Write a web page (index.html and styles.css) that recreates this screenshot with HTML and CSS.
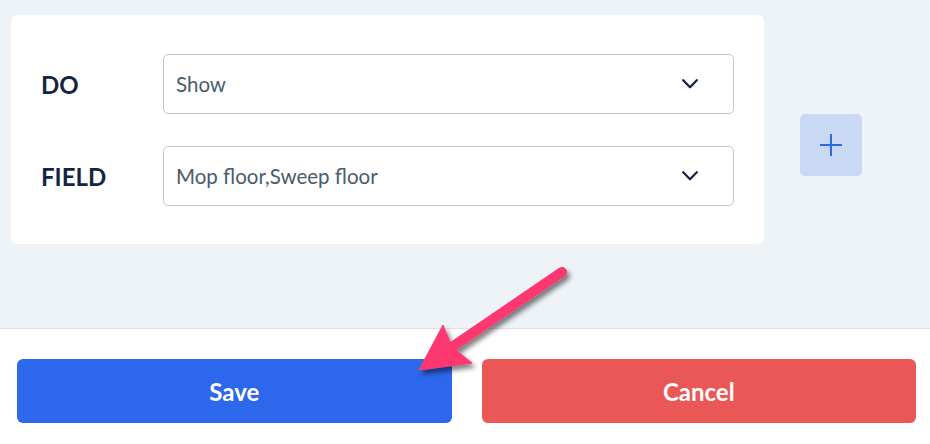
FILE: index.html
```html
<!DOCTYPE html>
<html>
<head>
<meta charset="utf-8">
<link rel="stylesheet" href="styles.css">
</head>
<body>
<div class="page">
  <div class="content">
    <div class="card">
      <div class="row">
        <div class="label">DO</div>
        <div class="select">
          <span class="value">Show</span>
          <svg class="chev" width="16" height="10" viewBox="0 0 16 10"><path d="M1.2 1.2 L8 8.2 L14.8 1.2" fill="none" stroke="#14253f" stroke-width="2.3" stroke-linecap="round" stroke-linejoin="round"/></svg>
        </div>
      </div>
      <div class="row">
        <div class="label">FIELD</div>
        <div class="select">
          <span class="value">Mop floor,Sweep floor</span>
          <svg class="chev" width="16" height="10" viewBox="0 0 16 10"><path d="M1.2 1.2 L8 8.2 L14.8 1.2" fill="none" stroke="#14253f" stroke-width="2.3" stroke-linecap="round" stroke-linejoin="round"/></svg>
        </div>
      </div>
    </div>
    <button class="add">
      <svg width="24" height="24" viewBox="0 0 24 24"><path d="M12 1 V23 M1 12 H23" stroke="#2e67e8" stroke-width="2" fill="none"/></svg>
    </button>
  </div>
  <div class="footer">
    <button class="btn save">Save</button>
    <button class="btn cancel">Cancel</button>
  </div>
  <svg class="arrow" width="930" height="444" viewBox="0 0 930 444">
    <defs>
      <filter id="sh" x="-20%" y="-20%" width="140%" height="140%">
        <feGaussianBlur in="SourceAlpha" stdDeviation="2.5"/>
        <feOffset dx="3" dy="4" result="b"/>
        <feComponentTransfer><feFuncA type="linear" slope="0.5"/></feComponentTransfer>
        <feMerge><feMergeNode/><feMergeNode in="SourceGraphic"/></feMerge>
      </filter>
    </defs>
    <g filter="url(#sh)" fill="#fd3870" stroke="#fd3870">
      <path d="M562 272 L452 347" stroke-width="10" stroke-linecap="round" fill="none"/>
      <path d="M419 370 L443 325 L452 347 L472 363 Z" stroke-width="1" stroke-linejoin="miter"/>
    </g>
  </svg>
</div>
</body>
</html>
```

FILE: styles.css
```css
html, body {
  margin: 0;
  padding: 0;
}
body {
  width: 930px;
  height: 444px;
  overflow: hidden;
  font-family: Lato, "Open Sans", sans-serif;
  background: #ffffff;
}
.page {
  position: relative;
  width: 930px;
  height: 444px;
}
.content {
  height: 329px;
  box-sizing: border-box;
  background: #eef3f8;
  border-bottom: 1px solid #dde1e6;
  padding: 15px 0 0 11px;
  display: flex;
  align-items: flex-start;
  gap: 36px;
}
.card {
  width: 753px;
  height: 229px;
  box-sizing: border-box;
  background: #ffffff;
  border-radius: 6px;
  padding: 39px 30px 0 30px;
  display: flex;
  flex-direction: column;
  gap: 32px;
}
.row {
  display: flex;
  align-items: center;
}
.label {
  width: 122px;
  font-weight: 700;
  font-size: 24px;
  color: #14253f;
}
.select {
  width: 571px;
  height: 60px;
  box-sizing: border-box;
  border: 1px solid #c3c7cc;
  border-radius: 5px;
  display: flex;
  align-items: center;
  justify-content: space-between;
  padding: 0 35px 0 12px;
}
.value {
  font-size: 20.5px;
  color: #4b5b6b;
}
.chev {
  display: block;
}
.add {
  margin-top: 99px;
  width: 62px;
  height: 62px;
  border: none;
  border-radius: 5px;
  background: #c9d9f5;
  display: flex;
  align-items: center;
  justify-content: center;
  padding: 0;
}
.add svg {
  display: block;
}
.footer {
  display: flex;
  gap: 30px;
  padding: 30px 14px 0 17px;
}
.btn {
  flex: 1;
  height: 64px;
  border: none;
  border-radius: 6px;
  color: #ffffff;
  font-family: Lato, "Open Sans", sans-serif;
  font-weight: 700;
  font-size: 24px;
}
.save {
  background: #2c67ec;
}
.cancel {
  background: #ea5757;
}
.arrow {
  position: absolute;
  left: 0;
  top: 0;
  pointer-events: none;
}
```
